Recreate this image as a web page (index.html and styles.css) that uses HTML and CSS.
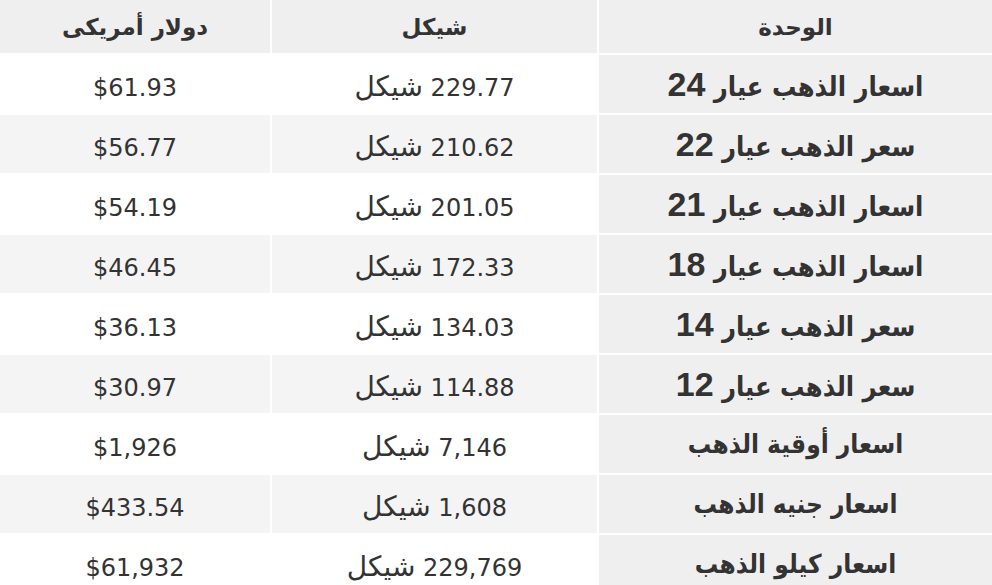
FILE: index.html
```html
<!DOCTYPE html>
<html lang="ar" dir="rtl">
<head>
<meta charset="utf-8">
<title>أسعار الذهب</title>
<link rel="stylesheet" href="styles.css">
</head>
<body>
<table class="prices">
  <thead>
    <tr class="head-row">
      <th class="col-unit">الوحدة</th>
      <th class="col-ils">شيكل</th>
      <th class="col-usd">دولار أمريكى</th>
    </tr>
  </thead>
  <tbody>
    <tr><th class="unit">اسعار الذهب عيار <span class="grade">24</span></th><td>229.77 <span class="cur">شيكل</span></td><td>$61.93</td></tr>
    <tr><th class="unit">سعر الذهب عيار <span class="grade">22</span></th><td>210.62 <span class="cur">شيكل</span></td><td>$56.77</td></tr>
    <tr><th class="unit">اسعار الذهب عيار <span class="grade">21</span></th><td>201.05 <span class="cur">شيكل</span></td><td>$54.19</td></tr>
    <tr><th class="unit">اسعار الذهب عيار <span class="grade">18</span></th><td>172.33 <span class="cur">شيكل</span></td><td>$46.45</td></tr>
    <tr><th class="unit">سعر الذهب عيار <span class="grade">14</span></th><td>134.03 <span class="cur">شيكل</span></td><td>$36.13</td></tr>
    <tr><th class="unit">سعر الذهب عيار <span class="grade">12</span></th><td>114.88 <span class="cur">شيكل</span></td><td>$30.97</td></tr>
    <tr><th class="unit unit-small">اسعار أوقية الذهب</th><td>7,146 <span class="cur">شيكل</span></td><td>$1,926</td></tr>
    <tr><th class="unit unit-small">اسعار جنيه الذهب</th><td>1,608 <span class="cur">شيكل</span></td><td>$433.54</td></tr>
    <tr><th class="unit unit-small">اسعار كيلو الذهب</th><td>229,769 <span class="cur">شيكل</span></td><td>$61,932</td></tr>
  </tbody>
</table>
</body>
</html>
```
FILE: styles.css
```css
html, body {
  margin: 0;
  padding: 0;
  background: #fff;
  overflow: hidden;
}
body {
  width: 992px;
  height: 585px;
}
.prices {
  direction: rtl;
  border-collapse: separate;
  border-spacing: 2px;
  margin: -2px;
  width: 996px;
  table-layout: fixed;
  color: #333;
}
.prices th, .prices td {
  padding: 0;
  text-align: center;
  vertical-align: middle;
}
.col-unit { width: 393px; }
.col-ils { width: 325px; }
.col-usd { width: 270px; }
.head-row th {
  height: 53px;
  background: #efefef;
  font-family: "DejaVu Sans", sans-serif;
  font-weight: bold;
  font-size: 23px;
}
.prices tbody tr td,
.prices tbody tr th {
  height: 58px;
}
.prices tbody tr:nth-child(odd) td { background: #fff; }
.prices tbody tr:nth-child(even) td { background: #f4f4f4; }
.prices td {
  font-family: "DejaVu Sans", sans-serif;
  font-size: 24px;
  line-height: 28px;
  padding-top: 7px;
  box-sizing: border-box;
}
.prices td .cur {
  font-size: 28px;
}
.prices .unit {
  background: #efefef;
  font-family: "DejaVu Sans Condensed", "DejaVu Sans", sans-serif;
  font-weight: bold;
  font-size: 27px;
}
.prices .unit .grade {
  font-family: "Liberation Sans", sans-serif;
  font-size: 34px;
}
.prices .unit-small {
  font-size: 26px;
}
```
